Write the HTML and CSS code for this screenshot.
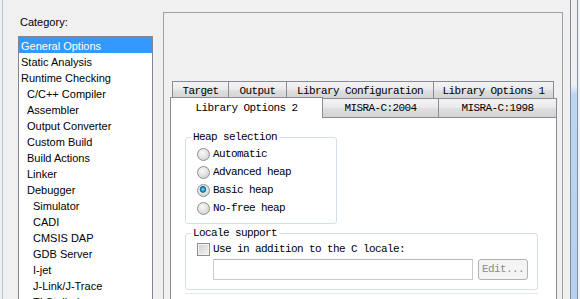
FILE: index.html
```html
<!DOCTYPE html>
<html>
<head>
    <title>Options for node</title>
    <link rel="stylesheet" href="styles.css">
</head>
<body>
    <div class="window">
        <div class="edge-left"></div>

        <div class="sidebar">
            <div class="cat-label">Category:</div>
            <ul class="cat-list">
                <li class="sel">General Options</li>
                <li>Static Analysis</li>
                <li>Runtime Checking</li>
                <li class="l1">C/C++ Compiler</li>
                <li class="l1">Assembler</li>
                <li class="l1">Output Converter</li>
                <li class="l1">Custom Build</li>
                <li class="l1">Build Actions</li>
                <li class="l1">Linker</li>
                <li class="l1">Debugger</li>
                <li class="l2">Simulator</li>
                <li class="l2">CADI</li>
                <li class="l2">CMSIS DAP</li>
                <li class="l2">GDB Server</li>
                <li class="l2">I-jet</li>
                <li class="l2">J-Link/J-Trace</li>
                <li class="l2">TI Stellaris</li>
            </ul>
        </div>

        <div class="main">
            <div class="outer-box">
                <div class="tab-row back">
                    <div class="tab t-target">Target</div>
                    <div class="tab t-output">Output</div>
                    <div class="tab t-libconf">Library Configuration</div>
                    <div class="tab t-libopt1">Library Options 1</div>
                </div>
                <div class="tab-row front">
                    <div class="tab active t-libopt2">Library Options 2</div>
                    <div class="tab t-misra04">MISRA-C:2004</div>
                    <div class="tab t-misra98">MISRA-C:1998</div>
                </div>

                <div class="panel">
                    <fieldset class="group heap">
                        <legend>Heap selection</legend>
                        <div class="opt"><span class="radio"></span>Automatic</div>
                        <div class="opt"><span class="radio"></span>Advanced heap</div>
                        <div class="opt"><span class="radio on"></span>Basic heap</div>
                        <div class="opt"><span class="radio"></span>No-free heap</div>
                    </fieldset>

                    <fieldset class="group locale">
                        <legend>Locale support</legend>
                        <div class="opt"><span class="check"></span>Use in addition to the C locale:</div>
                        <div class="locale-row">
                            <div class="textbox"></div>
                            <div class="btn disabled">Edit...</div>
                        </div>
                    </fieldset>

                    <div class="group-next"></div>
                </div>
            </div>
        </div>

        <div class="frame-right"></div>
    </div>
</body>
</html>
```

FILE: styles.css
```css
html, body {
    margin: 0;
    padding: 0;
    background: #f0f0f0;
}
.window {
    display: flex;
    width: 580px;
    height: 299px;
    overflow: hidden;
    background: #f0f0f0;
}
.edge-left {
    width: 2px;
    border-right: 1px solid #b7c3d1;
    flex-shrink: 0;
}

/* category list */
.sidebar {
    width: 145px;
    padding: 15px 0 0 15px;
    flex-shrink: 0;
    font-family: "Liberation Sans", Arial, sans-serif;
    font-size: 11px;
    color: #000;
}
.cat-label {
    line-height: 15px;
    padding-left: 2px;
    margin-bottom: 6px;
}
.cat-list {
    list-style: none;
    margin: 0;
    padding: 0;
    width: 133px;
    height: 300px;
    background: #fff;
    border: 1px solid #828790;
}
.cat-list li {
    height: 16px;
    line-height: 18px;
    padding-left: 2px;
    white-space: nowrap;
}
.cat-list li.l1 {
    padding-left: 8px;
}
.cat-list li.l2 {
    padding-left: 14px;
}
.cat-list li.sel {
    background: #3399ff;
    color: #fff;
}

/* right part */
.main {
    width: 400px;
    margin-right: 7px;
    flex-shrink: 0;
    display: flex;
}
.outer-box {
    flex: 1;
    margin-top: 12px;
    border: 1px solid #a0a0a0;
    border-bottom: none;
    padding-top: 68px;
    display: flex;
    flex-direction: column;
    font-family: "Liberation Mono", "Courier New", monospace;
    font-size: 11px;
    letter-spacing: -0.6px;
    color: #000;
}

.tab-row {
    display: flex;
    align-items: flex-start;
}
.tab-row.back {
    height: 17px;
    margin-left: 8px;
}
.tab-row.front {
    height: 19px;
    margin-left: 6px;
}
.tab {
    box-sizing: border-box;
    border: 1px solid #898c95;
    border-bottom: none;
    background: linear-gradient(#f3f3f3, #ebebeb 45%, #dedede 55%, #d4d4d4);
    text-align: center;
    white-space: nowrap;
    margin-left: -1px;
}
.tab:first-child {
    margin-left: 0;
}
.tab-row.back .tab {
    height: 17px;
    line-height: 17px;
    padding-top: 1px;
}
.tab-row.front .tab {
    height: 19px;
    line-height: 19px;
}
.tab-row.front .tab.active {
    position: relative;
    z-index: 1;
    height: 21px;
    margin-top: -1px;
    line-height: 20px;
    background: #fff;
}
.t-target { width: 57px; }
.t-output { width: 59px; }
.t-libconf { width: 148px; }
.t-libopt1 { width: 121px; }
.t-libopt2 { width: 153px; }
.t-misra04 { width: 117px; }
.t-misra98 { width: 119px; }

.panel {
    flex: 1;
    width: 387px;
    box-sizing: border-box;
    margin-left: 6px;
    background: #fff;
    border: 1px solid #898c95;
    border-bottom: none;
    padding: 12px 0 0 14px;
}

/* group boxes */
.group {
    box-sizing: border-box;
    margin: 0;
    border: 1px solid #d5dfe5;
    border-radius: 3px;
    padding: 1px 4px 6px 11px;
}
.group legend {
    padding: 0 2px;
    margin-left: -6px;
    line-height: 14px;
}
.group.heap {
    width: 152px;
}
.group.locale {
    width: 353px;
    margin-top: 2px;
    padding-top: 0;
    padding-bottom: 9px;
}
.group-next {
    width: 353px;
    margin-top: 3px;
    border-top: 1px solid #e6e8ea;
}

.opt {
    display: flex;
    align-items: center;
    height: 18px;
    white-space: nowrap;
}
.radio {
    width: 13px;
    height: 13px;
    box-sizing: border-box;
    border-radius: 50%;
    border: 1px solid #8e8f8f;
    background: radial-gradient(circle at 40% 35%, #f8f8f8 0, #e0e0e0 55%, #c8c8c8 100%);
    margin-right: 3px;
    flex-shrink: 0;
}
.radio.on {
    background:
        radial-gradient(circle at 45% 40%, #9fe3f7 0, #2ca0d6 1.5px, #11638f 3px, rgba(0,0,0,0) 3.6px),
        radial-gradient(circle at 40% 35%, #f8f8f8 0, #e0e0e0 55%, #c8c8c8 100%);
}
.check {
    width: 13px;
    height: 13px;
    box-sizing: border-box;
    border: 1px solid #8e8f8f;
    box-shadow: inset 0 0 0 1px #f4f4f4;
    background: linear-gradient(135deg, #cfcfcf, #f5f5f5);
    margin-right: 3px;
    flex-shrink: 0;
}

.locale-row {
    display: flex;
    align-items: center;
    margin-left: 16px;
    margin-top: 1px;
}
.textbox {
    width: 260px;
    height: 21px;
    box-sizing: border-box;
    border: 1px solid #c9cbcf;
    border-top-color: #b5b7bb;
    background: #fff;
}
.btn {
    width: 50px;
    height: 21px;
    box-sizing: border-box;
    margin-left: 5px;
    border: 1px solid #adb2b5;
    border-radius: 3px;
    background: #f4f4f4;
    line-height: 19px;
    text-align: center;
}
.btn.disabled {
    color: #8d8d8d;
}

/* window frame on the right */
.frame-right {
    width: 6px;
    flex-shrink: 0;
    border-left: 1px solid #7f8c9a;
    border-right: 1px solid #8595a6;
    margin-right: 2px;
    background: linear-gradient(#f2eeee 0, #eef0f4 85px, #bcd5f1 95px, #b5cfee 100%);
}
```
